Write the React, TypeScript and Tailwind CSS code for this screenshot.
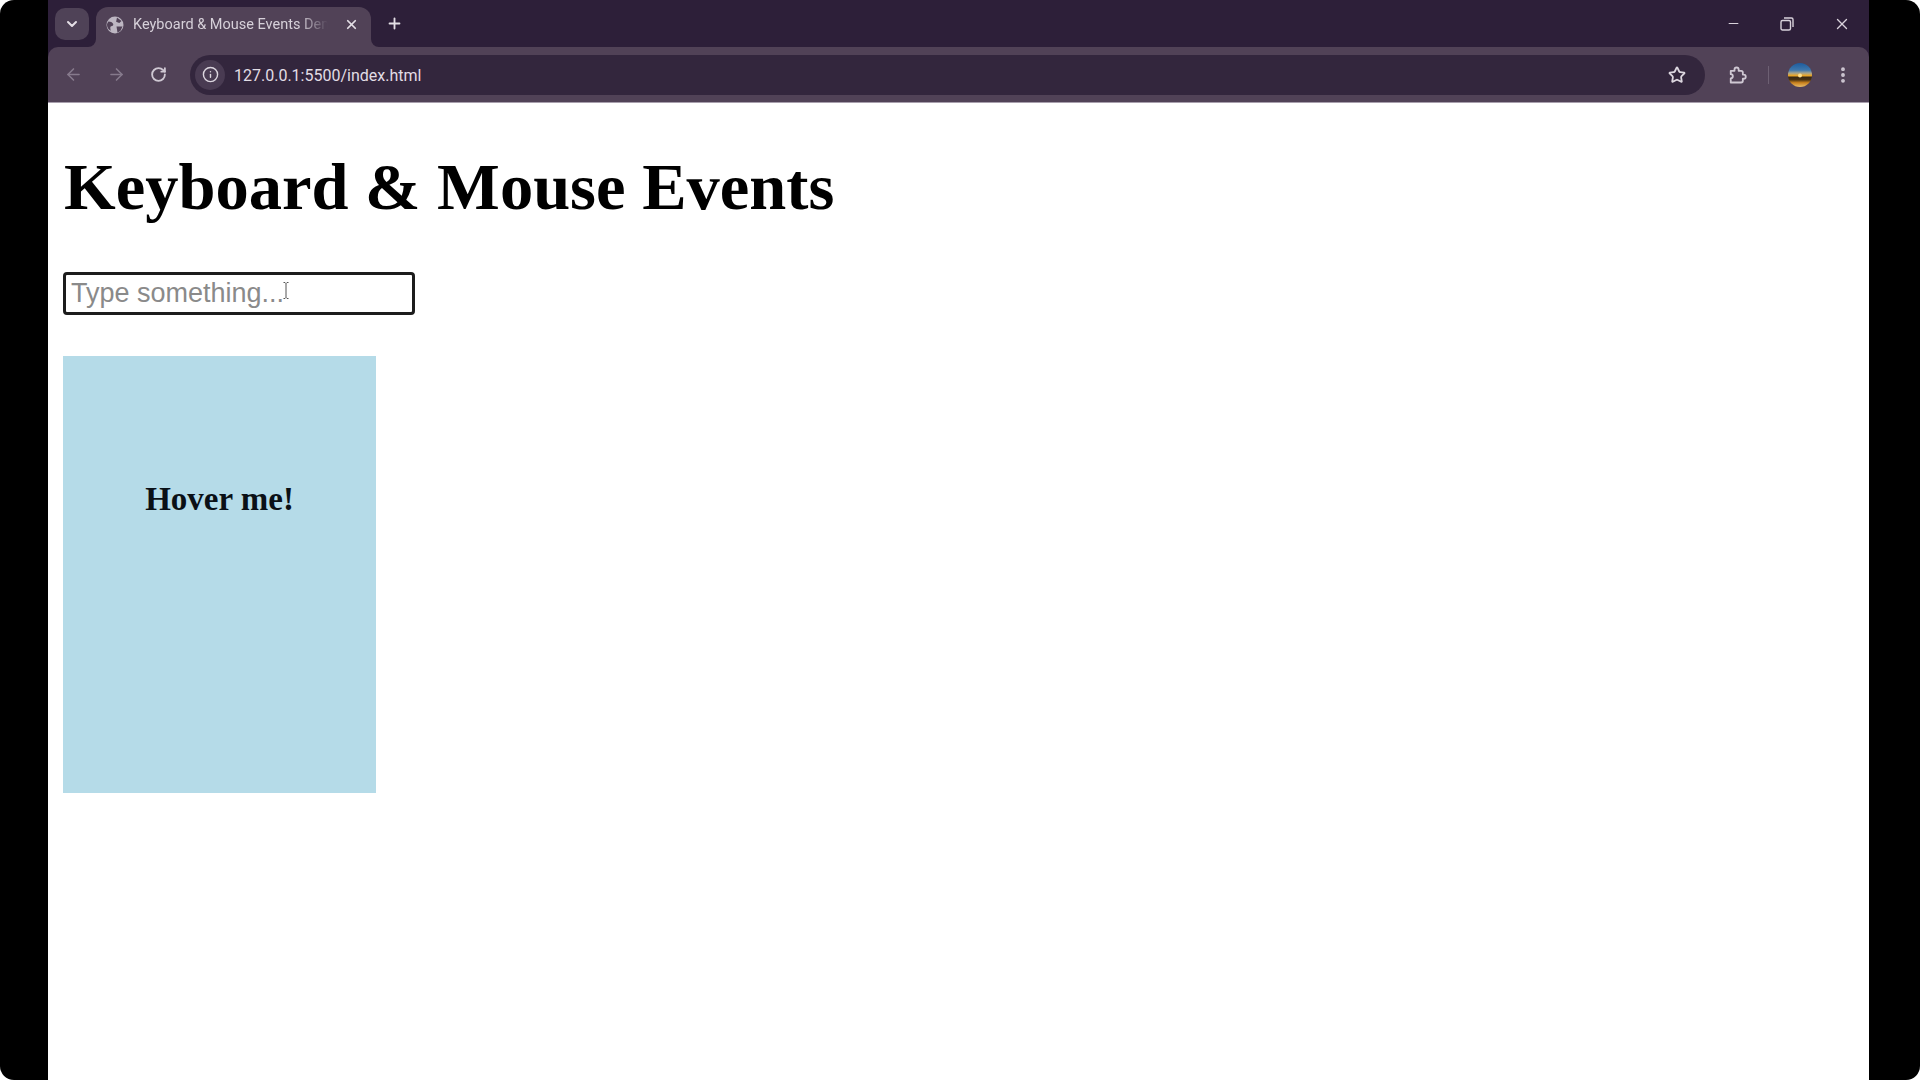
import { ChevronDown, X, Plus, ArrowLeft, ArrowRight, RotateCw, Info, Star, EllipsisVertical, Minus } from "lucide-react";

function Globe() {
  return (
    <svg width="18" height="18" viewBox="0 0 18 18">
      <circle cx="9" cy="9" r="8.5" fill="#bdb6c2" />
      <path d="M2.5 5.5c2 .3 3.8.6 4.6 2.3.7 1.5-.5 2.3-2 2.4-1.2.1-.9 2.2-.3 4.6C2.6 13.6 1 11.5 1 9c0-1.3.6-2.5 1.5-3.5zM11 1.5l4.5 3.4-2.2 2-3.2-1.2zM10.5 10.5h6l-2 4.2-3 2z" fill="#514257" />
    </svg>
  );
}

function Restore() {
  return (
    <svg width="14" height="14" viewBox="0 0 14 14" fill="none" stroke="#d8d2db" strokeWidth="1.4">
      <rect x="1" y="3.5" width="9.5" height="9.5" rx="1.5" />
      <path d="M4 1h7.5A1.5 1.5 0 0 1 13 2.5V10" />
    </svg>
  );
}

function Extension() {
  return (
    <svg width="20" height="20" viewBox="0 0 24 24" fill="none" stroke="#cfc8d3" strokeWidth="2.2" strokeLinejoin="round">
      <path d="M4.5 7H9V5.5a2.5 2.5 0 0 1 5 0V7h3a2 2 0 0 1 2 2v2.5h1a2.5 2.5 0 0 1 0 5h-1V19a2 2 0 0 1-2 2H4.5V16a2.5 2.5 0 0 0 0-5z" />
    </svg>
  );
}

function Avatar() {
  return (
    <svg width="24" height="24" viewBox="0 0 24 24">
      <defs>
        <linearGradient id="sky" x1="0" y1="0" x2="0" y2="1">
          <stop offset="0" stopColor="#1d5c9e" />
          <stop offset="0.3" stopColor="#3f78ad" />
          <stop offset="0.42" stopColor="#a6a58f" />
          <stop offset="0.52" stopColor="#e9a72a" />
          <stop offset="0.6" stopColor="#3a2a14" />
          <stop offset="0.7" stopColor="#4a3312" />
          <stop offset="0.82" stopColor="#c9811d" />
          <stop offset="1" stopColor="#e7bd6a" />
        </linearGradient>
      </defs>
      <circle cx="12" cy="12" r="12" fill="url(#sky)" />
      <circle cx="12" cy="12.5" r="2" fill="#ffe08a" />
    </svg>
  );
}

export default function App() {
  return (
    <div className="w-[1920px] h-[1080px] bg-white overflow-hidden">
      <div className="w-full h-full bg-black rounded-[14px] flex">
        <div className="ml-[48px] w-[1821px] h-full bg-white flex flex-col">
          <div className="bg-[#2d1f39] shrink-0">
            <div className="relative z-10 h-[47px] flex items-center">
              <div className="ml-[7px] mb-[-1px] w-[34px] h-[32px] rounded-[10px] bg-[#4f4257] flex items-center justify-center">
                <ChevronDown size={16} strokeWidth={3} color="#e4dfe6" />
              </div>
              <div className="relative ml-[7px] mt-[7px] w-[275px] h-[40px] pb-[5px] rounded-t-[12px] bg-[#514257] flex items-center">
                <svg className="absolute left-[-8px] bottom-0" width="8" height="8" viewBox="0 0 8 8">
                  <path d="M8 0v8H0a8 8 0 0 0 8-8z" fill="#514257" />
                </svg>
                <svg className="absolute right-[-8px] bottom-0" width="8" height="8" viewBox="0 0 8 8">
                  <path d="M0 0v8h8A8 8 0 0 1 0 0z" fill="#514257" />
                </svg>
                <div className="ml-[10px] mr-[9px] flex"><Globe /></div>
                <span className="w-[195px] overflow-hidden whitespace-nowrap text-[14.5px] text-[#d6d0d9] font-['Roboto',sans-serif] [mask-image:linear-gradient(to_right,black_85%,transparent)]">Keyboard &amp; Mouse Events Demo</span>
                <X size={15} strokeWidth={2.8} className="ml-[16px]" color="#e4dfe6" />
              </div>
              <Plus size={17} strokeWidth={2.6} className="ml-[15px]" color="#e4dfe6" />
              <div className="ml-auto flex items-center">
                <Minus size={15} strokeWidth={1.8} color="#d8d2db" />
                <div className="ml-[39px] flex"><Restore /></div>
                <X size={18} strokeWidth={1.8} className="ml-[39px] mr-[18px]" color="#d8d2db" />
              </div>
            </div>
            <div className="h-[56px] bg-[#514257] rounded-t-[10px] flex items-center border-b border-[#a89fad]">
              <ArrowLeft size={19} className="ml-[16px]" color="#867a8c" />
              <ArrowRight size={19} className="ml-[24px]" color="#867a8c" />
              <RotateCw size={17} strokeWidth={2.6} className="ml-[24px]" color="#cfc8d3" />
              <div className="ml-[23px] w-[1515px] h-[40px] rounded-[20px] bg-[#33263d] flex items-center">
                <div className="ml-[5px] w-[30px] h-[30px] rounded-full bg-[#493b52] flex items-center justify-center">
                  <Info size={17} strokeWidth={2} color="#dcd6df" />
                </div>
                <span className="ml-[9px] pt-[2px] text-[16px] text-[#e2dde5] font-['Roboto',sans-serif]">127.0.0.1:5500/index.html</span>
                <Star size={18} strokeWidth={2.4} className="ml-auto mr-[19px]" color="#dcd6df" />
              </div>
              <div className="ml-[22px] flex"><Extension /></div>
              <div className="ml-[21px] w-px h-[18px] bg-[#6d6073]" />
              <div className="ml-[19px] flex"><Avatar /></div>
              <EllipsisVertical size={20} strokeWidth={2.6} className="ml-[21px]" color="#cfc8d3" />
            </div>
          </div>
          <div className="flex-1 pl-[15px] font-['Liberation_Serif',serif] text-black">
            <h1 className="mt-[47px] ml-[1px] text-[66.5px] leading-[74px] font-bold whitespace-nowrap">Keyboard &amp; Mouse Events</h1>
            <div className="relative mt-[48px] w-[352px]">
              <input
                placeholder="Type something..."
                className="block w-[352px] h-[43px] border-[3px] border-[#1c1c1c] rounded-[4px] px-[5px] text-[27px] font-['Liberation_Sans',sans-serif] placeholder:text-[#8a8a8a]"
              />
              <svg className="absolute left-[219px] top-[10px]" width="8" height="17" viewBox="0 0 8 17" fill="none" stroke="#555" strokeWidth="1">
                <path d="M1.5 .5h1.5l1 1 1-1h1.5M4 1.5v14M1.5 16.5h1.5l1-1 1 1h1.5" />
              </svg>
            </div>
            <div className="mt-[41px] w-[313px] h-[437px] bg-[#b5dbe8] pt-[125px] text-center text-[33px] leading-[37px] font-bold text-[#0a1016]">
              Hover me!
            </div>
          </div>
        </div>
      </div>
    </div>
  );
}
